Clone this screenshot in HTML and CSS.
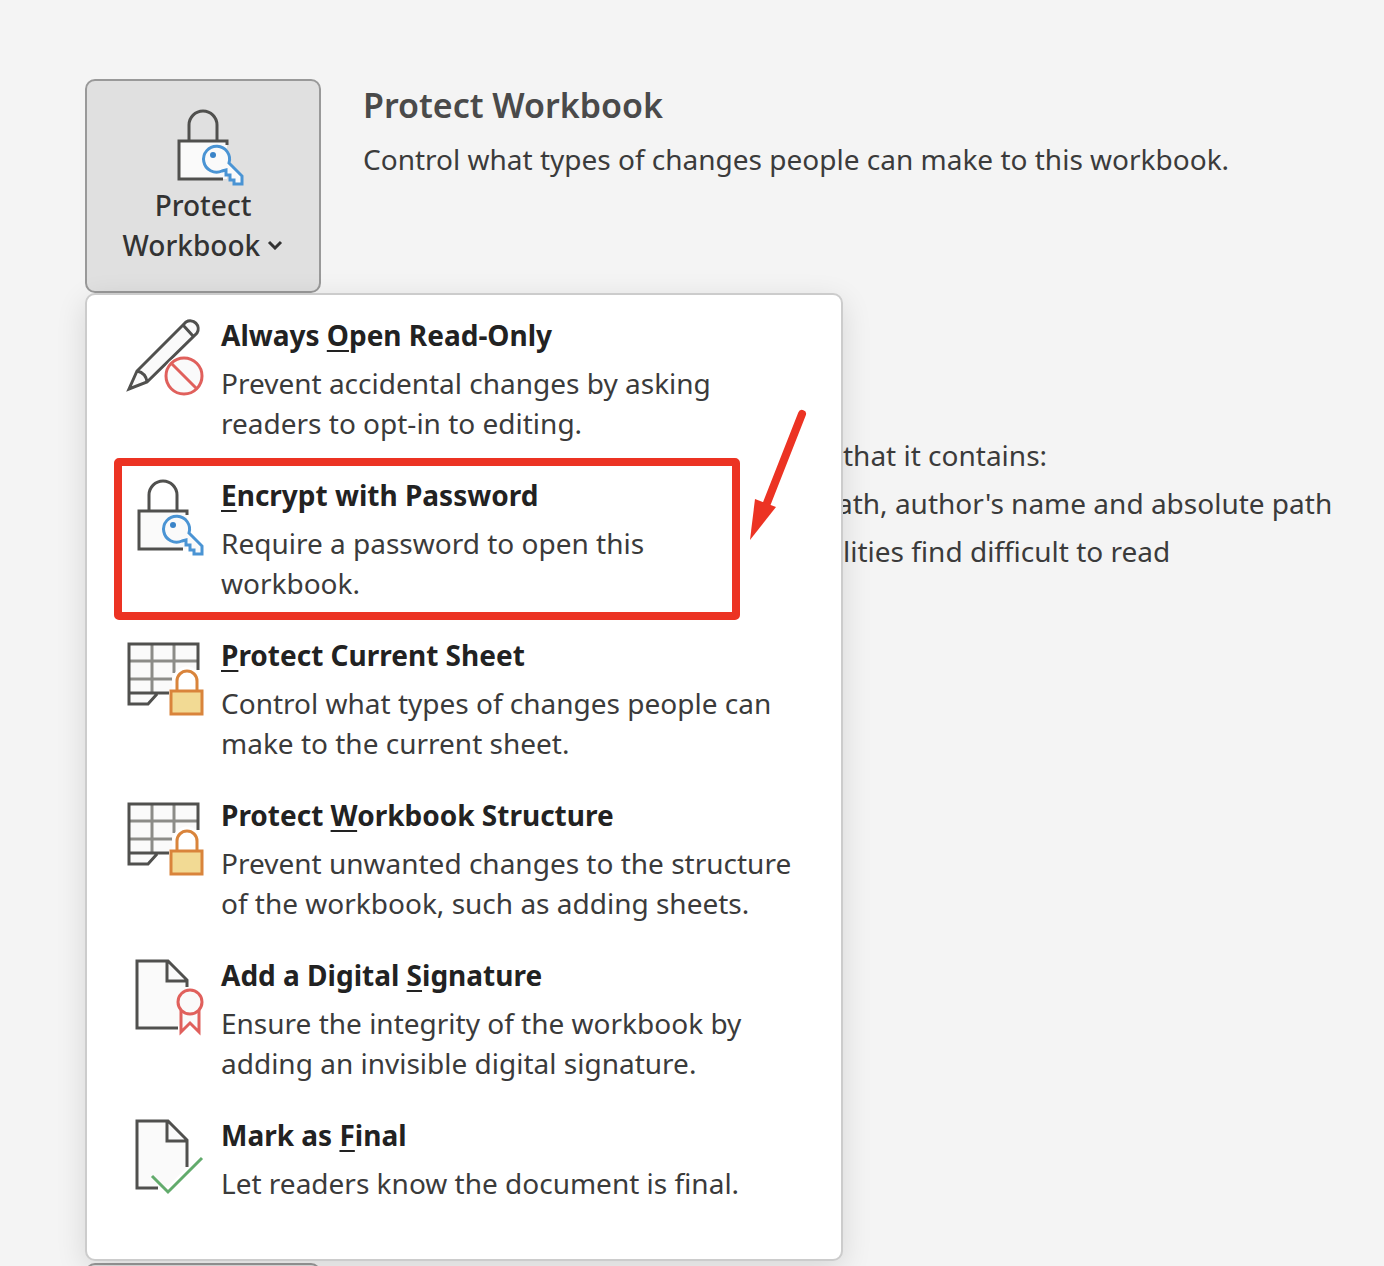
FILE: index.html
```html
<!DOCTYPE html>
<html lang="en">
<head>
    <meta charset="utf-8">
    <title>Protect Workbook</title>
    <link rel="stylesheet" href="styles.css">
</head>
<body>
    <!-- shared icon shapes -->
    <svg class="symbols" aria-hidden="true">
        <symbol id="lock-key" viewBox="0 0 80 80" overflow="visible">
            <path class="paper" d="M14 36h48v38H14z"/>
            <path class="ink" d="M24 36V20a14 14 0 0 1 28 0v16M62 40v-4H14v38h44"/>
            <path class="key" d="M64 58L77 71V79H69V75H65V70H61V65L57 66A13 13 0 1 1 64 58Z"/>
            <circle class="key-hole" cx="48" cy="50" r="3"/>
        </symbol>
        <symbol id="sheet-lock" viewBox="0 0 80 80" overflow="visible">
            <path class="paper" d="M4 9h69v49H32L23 69H4z"/>
            <path class="grid-line" d="M27 9v49M49 9v29M4 26h69M4 44h43"/>
            <path class="ink" d="M73 35V9H4v60h19l9-10M4 58h40"/>
            <path class="gap" d="M52 56V46a10 10 0 0 1 20 0v10"/>
            <path class="shackle" d="M52 56V46a10 10 0 0 1 20 0v10"/>
            <path class="lock-body" d="M46 56h31v23H46z"/>
        </symbol>
    </svg>

    <main class="page">
        <section class="row">
            <div class="dropdown">
                <button class="tile" type="button" aria-haspopup="menu" aria-expanded="true">
                    <svg class="icon"><use href="#lock-key"/></svg>
                    <span>Protect</span>
                    <span>Workbook
                        <svg class="chevron" viewBox="0 0 16 10"><path d="M2 2l6 6 6-6"/></svg>
                    </span>
                </button>

                <div class="menu" role="menu">
                    <button class="item" type="button" role="menuitem">
                        <svg class="icon" viewBox="0 0 80 80">
                            <path class="paper" d="M4 74L12 56L58 10L62 7A9 9 0 0 1 73 18L67 23L22 67Z"/>
                            <path class="ink" d="M4 74L12 56L58 10L61 7A8 8 0 0 1 72 18L22 67ZM12 56Q21 58 22 67M58 10L68 21"/>
                            <circle class="ban-gap" cx="59" cy="61" r="18"/>
                            <circle class="ban" cx="59" cy="61" r="18"/>
                            <path class="ban" d="M47 49l24 24"/>
                        </svg>
                        <span class="text">
                            <strong>Always <u>O</u>pen Read-Only</strong>
                            <span>Prevent accidental changes by asking<br>readers to opt-in to editing.</span>
                        </span>
                    </button>

                    <button class="item" type="button" role="menuitem">
                        <svg class="icon"><use href="#lock-key"/></svg>
                        <span class="text">
                            <strong><u>E</u>ncrypt with Password</strong>
                            <span>Require a password to open this<br>workbook.</span>
                        </span>
                        <span class="highlight"></span>
                        <svg class="arrow" viewBox="0 0 80 140">
                            <path class="arrow-line" d="M57 9L22 98"/>
                            <path class="arrow-head" d="M5 135L10 94L31 102Z"/>
                        </svg>
                    </button>

                    <button class="item" type="button" role="menuitem">
                        <svg class="icon"><use href="#sheet-lock"/></svg>
                        <span class="text">
                            <strong><u>P</u>rotect Current Sheet</strong>
                            <span>Control what types of changes people can<br>make to the current sheet.</span>
                        </span>
                    </button>

                    <button class="item" type="button" role="menuitem">
                        <svg class="icon"><use href="#sheet-lock"/></svg>
                        <span class="text">
                            <strong>Protect <u>W</u>orkbook Structure</strong>
                            <span>Prevent unwanted changes to the structure<br>of the workbook, such as adding sheets.</span>
                        </span>
                    </button>

                    <button class="item" type="button" role="menuitem">
                        <svg class="icon" viewBox="0 0 80 80">
                            <path class="paper" d="M12 6h31l19 19v28L52 73H12z"/>
                            <path class="ink" d="M53 73H12V6h31l19 19v7M42 6v20h20"/>
                            <path class="seal" d="M56 55v22l9-9 9 9V55"/>
                            <circle class="seal" cx="65" cy="47" r="12"/>
                        </svg>
                        <span class="text">
                            <strong>Add a Digital <u>S</u>ignature</strong>
                            <span>Ensure the integrity of the workbook by<br>adding an invisible digital signature.</span>
                        </span>
                    </button>

                    <button class="item" type="button" role="menuitem">
                        <svg class="icon" viewBox="0 0 80 80">
                            <path class="paper" d="M12 6h31l19 19v27L43 71 36 73H12z"/>
                            <path class="ink" d="M33 73H12V6h31l19 19v27M42 6v20h20"/>
                            <path class="check" d="M27 61l16 16 34-34"/>
                        </svg>
                        <span class="text">
                            <strong>Mark as <u>F</u>inal</strong>
                            <span>Let readers know the document is final.</span>
                        </span>
                    </button>
                </div>
            </div>

            <div class="intro">
                <h2>Protect Workbook</h2>
                <p>Control what types of changes people can make to this workbook.</p>
            </div>
        </section>

        <section class="row inspect">
            <ul>
                <li class="indent">that it contains:</li>
                <li>ath, author's name and absolute path</li>
                <li class="indent">lities find difficult to read</li>
            </ul>
        </section>

        <section class="row">
            <button class="tile" type="button" aria-label="Manage Workbook"></button>
        </section>
    </main>
</body>
</html>
```

FILE: styles.css
```css
* {
    box-sizing: border-box;
}

body {
    margin: 0;
    background: #f4f4f4;
    color: #3b3b3b;
    font-family: "Noto Sans", "Open Sans", sans-serif;
    font-size: 28px;
    line-height: 40px;
}

button {
    font: inherit;
    color: inherit;
    cursor: pointer;
}

.symbols {
    position: absolute;
    width: 0;
    height: 0;
}

.page {
    height: 100vh;
    padding: 79px 40px 0 85px;
    overflow: hidden;
}

.row {
    display: flex;
    gap: 42px;
}

.dropdown {
    position: relative;
}

.tile {
    display: flex;
    flex-direction: column;
    align-items: center;
    width: 236px;
    min-height: 214px;
    padding: 24px 0;
    background: #e0e0e0;
    border: 2px solid #999;
    border-radius: 10px;
    font-weight: 500;
    color: #333;
}

.tile .icon {
    width: 84px;
    padding-left: 4px;
}

.chevron {
    width: 16px;
    height: 10px;
    vertical-align: 6px;
    fill: none;
    stroke: #333;
    stroke-width: 3;
}

.intro h2 {
    margin: 4px 0 12px;
    font-size: 34px;
    font-weight: 600;
    line-height: 44px;
    color: #4a4a4a;
}

.intro p {
    margin: 0;
}

.inspect {
    min-height: 970px;
    padding: 138px 0 0 752px;
}

.inspect ul {
    margin: 0;
    padding: 0;
    list-style: none;
    line-height: 48px;
    white-space: nowrap;
}

.inspect .indent {
    padding-left: 6px;
}

/* drop-down menu */
.menu {
    position: absolute;
    top: 100%;
    left: 0;
    z-index: 1;
    width: 758px;
    padding: 4px 0 40px;
    background: #fff;
    border: 2px solid #ccc;
    border-radius: 10px;
    box-shadow: 0 8px 30px rgba(0, 0, 0, 0.12);
}

.item {
    position: relative;
    display: flex;
    align-items: flex-start;
    gap: 16px;
    width: 100%;
    padding: 16px 16px 16px 38px;
    background: none;
    border: 0;
    text-align: left;
}

.text {
    display: flex;
    flex-direction: column;
    gap: 8px;
    white-space: nowrap;
}

.text strong {
    font-weight: 700;
    color: #222;
}

.text u {
    text-decoration-thickness: 2px;
    text-underline-offset: 4px;
}

/* marker around the password entry */
.highlight {
    position: absolute;
    top: -1px;
    right: 101px;
    bottom: -1px;
    left: 27px;
    border: 8px solid #ec3323;
    border-radius: 5px;
}

.arrow {
    position: absolute;
    top: -54px;
    right: 16px;
    width: 80px;
    height: 140px;
}

.arrow-line {
    stroke: #ec3323;
    stroke-width: 8;
    stroke-linecap: round;
}

.arrow-head {
    fill: #ec3323;
}

/* icons */
.icon {
    flex: none;
    width: 80px;
    height: 80px;
    overflow: visible;
    fill: none;
    stroke-width: 3;
}

.paper {
    fill: #fafafa;
}

.ink {
    stroke: #50504e;
}

.grid-line {
    stroke: #8c8c88;
}

.key {
    fill: #fafafa;
    stroke: #4a94d4;
}

.key-hole {
    fill: #3a84c8;
}

.gap {
    fill: #fff;
    stroke: #fff;
    stroke-width: 9;
}

.ban-gap {
    stroke: #fff;
    stroke-width: 5;
}

.shackle {
    stroke: #d9843b;
}

.lock-body {
    fill: #f2da94;
    stroke: #d9843b;
}

.ban {
    stroke: #e0605c;
}

circle.ban {
    fill: #fafafa;
}

.seal {
    fill: #fafafa;
    stroke: #e0605c;
}

.check {
    stroke: #62ab6c;
}
```
